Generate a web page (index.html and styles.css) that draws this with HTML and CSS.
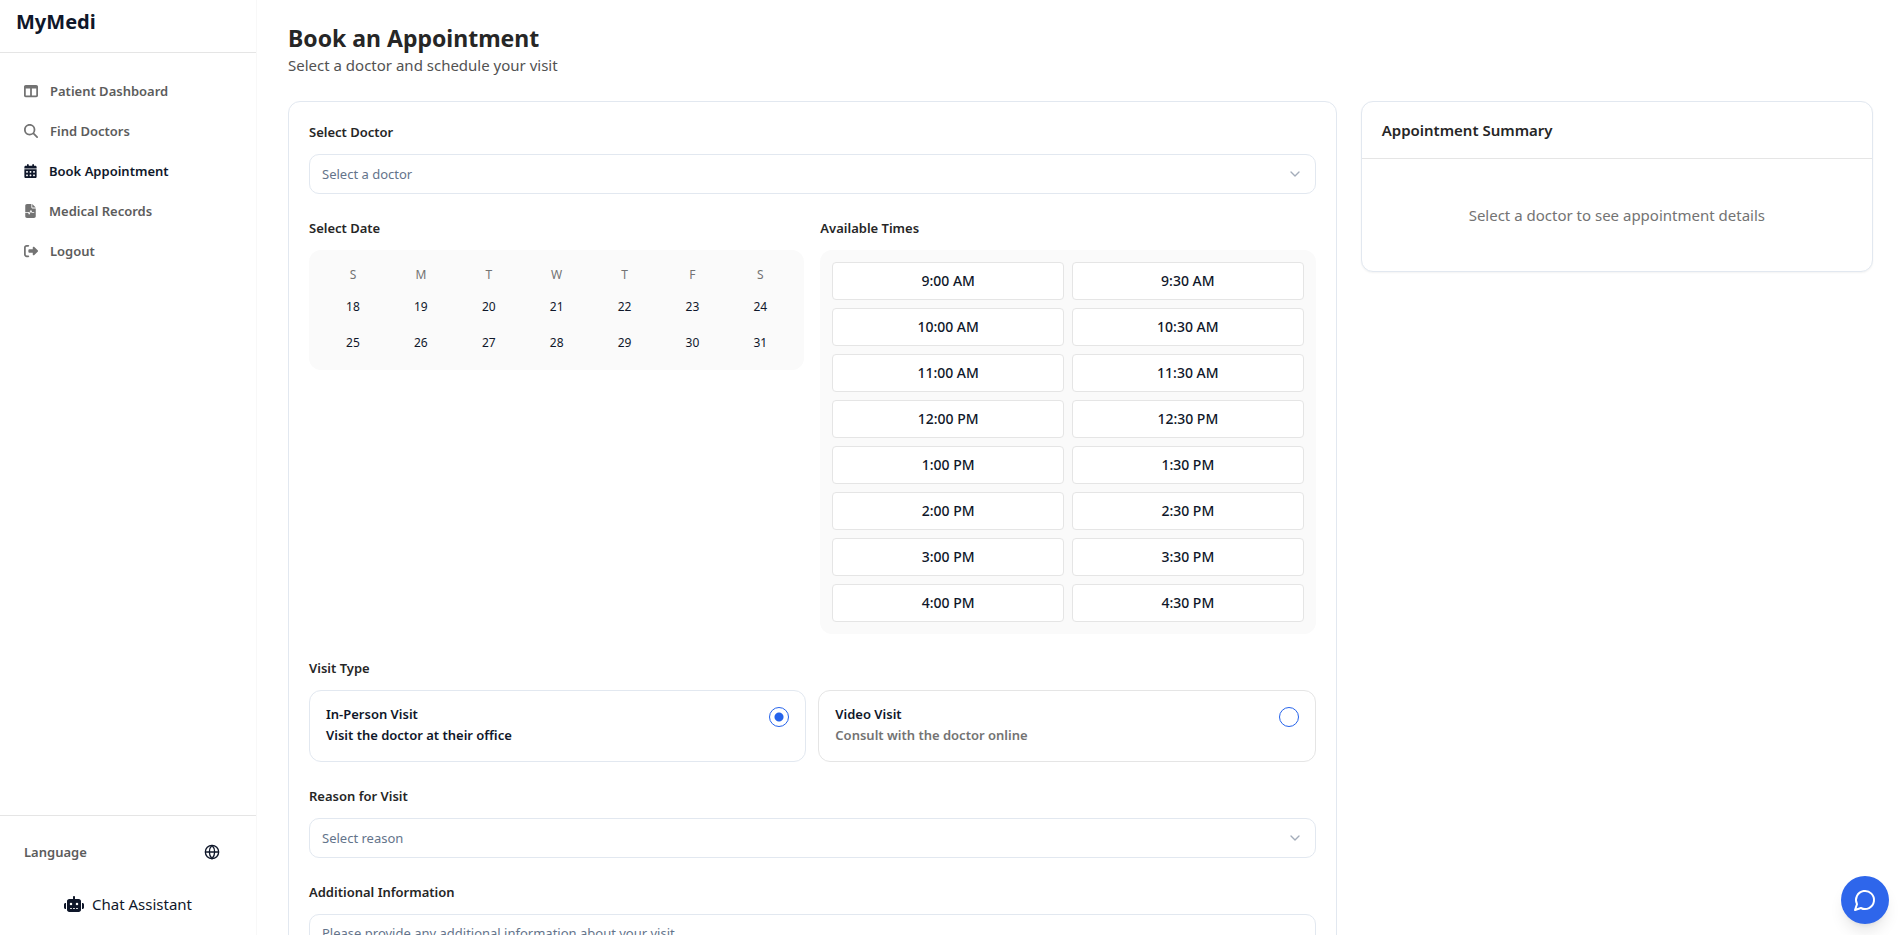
FILE: index.html
```html
<!DOCTYPE html>
<html lang="en">
<head>
<meta charset="utf-8">
<meta name="viewport" content="width=device-width, initial-scale=1">
<title>MyMedi - Book an Appointment</title>
<link rel="stylesheet" href="styles.css">
</head>
<body>
<div class="app">
  <aside class="sidebar">
    <div class="brand">MyMedi</div>
    <nav class="nav">
      <a class="nav-link" href="#"><svg class="fa" viewBox="0 0 512 512"><path d="M0 96C0 60.7 28.7 32 64 32H448c35.3 0 64 28.7 64 64V416c0 35.3-28.7 64-64 64H64c-35.3 0-64-28.7-64-64V96zm64 64V416H224V160H64zm384 0H288V416H448V160z"/></svg>Patient Dashboard</a>
      <a class="nav-link" href="#"><svg class="fa" viewBox="0 0 512 512"><path d="M416 208c0 45.900-14.900 88.300-40 122.700L502.600 457.400c12.500 12.500 12.500 32.800 0 45.300s-32.800 12.500-45.300 0L330.700 376c-34.400 25.200-76.800 40-122.700 40C93.100 416 0 322.900 0 208S93.100 0 208 0S416 93.100 416 208zM208 352a144 144 0 1 0 0-288 144 144 0 1 0 0 288z"/></svg>Find Doctors</a>
      <a class="nav-link active" href="#" aria-current="page"><svg class="fa narrow" viewBox="0 0 448 512"><path d="M128 0c17.700 0 32 14.300 32 32V64H288V32c0-17.700 14.300-32 32-32s32 14.300 32 32V64h48c26.500 0 48 21.500 48 48v48H0V112C0 85.500 21.500 64 48 64H96V32c0-17.700 14.300-32 32-32zM0 192H448V464c0 26.500-21.500 48-48 48H48c-26.500 0-48-21.500-48-48V192zm64 80v32c0 8.800 7.200 16 16 16h32c8.800 0 16-7.200 16-16V272c0-8.800-7.200-16-16-16H80c-8.800 0-16 7.200-16 16zm128 0v32c0 8.800 7.200 16 16 16h32c8.800 0 16-7.200 16-16V272c0-8.800-7.200-16-16-16H208c-8.800 0-16 7.200-16 16zm144-16c-8.800 0-16 7.200-16 16v32c0 8.800 7.200 16 16 16h32c8.800 0 16-7.200 16-16V272c0-8.800-7.200-16-16-16H336zM64 400v32c0 8.800 7.200 16 16 16h32c8.800 0 16-7.200 16-16V400c0-8.800-7.200-16-16-16H80c-8.800 0-16 7.200-16 16zm144-16c-8.800 0-16 7.200-16 16v32c0 8.800 7.200 16 16 16h32c8.800 0 16-7.200 16-16V400c0-8.800-7.200-16-16-16H208zm112 16v32c0 8.800 7.200 16 16 16h32c8.800 0 16-7.200 16-16V400c0-8.800-7.200-16-16-16H336c-8.800 0-16 7.200-16 16z"/></svg>Book Appointment</a>
      <a class="nav-link" href="#"><svg class="fa narrow" viewBox="0 0 448 512"><path d="M96 0C60.700 0 32 28.700 32 64V288H144c6.100 0 11.600 3.400 14.300 8.800L176 332.200l49.700-99.400c2.700-5.400 8.300-8.800 14.300-8.800s11.600 3.400 14.300 8.800L281.900 288H352c8.800 0 16 7.200 16 16s-7.200 16-16 16H272c-6.100 0-11.600-3.400-14.300-8.800L240 275.800l-49.700 99.400c-2.700 5.400-8.300 8.800-14.300 8.800s-11.600-3.400-14.300-8.800L134.100 320H32V448c0 35.300 28.700 64 64 64H352c35.300 0 64-28.700 64-64V160H288c-17.700 0-32-14.300-32-32V0H96zM288 0V128H416L288 0z"/></svg>Medical Records</a>
      <a class="nav-link" href="#"><svg class="fa" viewBox="0 0 512 512"><path d="M377.900 105.900L500.700 228.700c7.200 7.200 11.300 17.100 11.300 27.300s-4.100 20.100-11.300 27.300L377.900 406.100c-6.400 6.400-15 9.900-24 9.900c-18.700 0-33.900-15.200-33.900-33.900l0-62.100-128 0c-17.700 0-32-14.300-32-32l0-64c0-17.700 14.300-32 32-32l128 0 0-62.100c0-18.700 15.200-33.900 33.900-33.900c9 0 17.600 3.600 24 9.900zM160 96L96 96c-17.700 0-32 14.300-32 32l0 256c0 17.700 14.300 32 32 32l64 0c17.700 0 32 14.300 32 32s-14.300 32-32 32l-64 0c-53 0-96-43-96-96L0 128C0 75 43 32 96 32l64 0c17.700 0 32 14.300 32 32s-14.300 32-32 32z"/></svg>Logout</a>
    </nav>
    <div class="side-foot">
      <div class="language">
        <span>Language</span>
        <button class="icon-btn" type="button" aria-label="Change language"><svg class="line-icon" viewBox="0 0 24 24"><circle cx="12" cy="12" r="10"/><path d="M12 2a14.500 14.500 0 0 0 0 20 14.500 14.500 0 0 0 0-20M2 12h20"/></svg></button>
      </div>
      <button class="assistant" type="button"><svg class="robot" viewBox="0 0 640 512"><path d="M320 0c17.700 0 32 14.300 32 32V96H472c39.800 0 72 32.200 72 72V440c0 39.800-32.200 72-72 72H168c-39.800 0-72-32.200-72-72V168c0-39.800 32.200-72 72-72H288V32c0-17.700 14.300-32 32-32zM208 384c-8.800 0-16 7.200-16 16s7.200 16 16 16h32c8.800 0 16-7.200 16-16s-7.200-16-16-16H208zm96 0c-8.800 0-16 7.200-16 16s7.200 16 16 16h32c8.800 0 16-7.200 16-16s-7.200-16-16-16H304zm96 0c-8.800 0-16 7.200-16 16s7.200 16 16 16h32c8.800 0 16-7.200 16-16s-7.200-16-16-16H400zM264 256a40 40 0 1 0 -80 0 40 40 0 1 0 80 0zm152 40a40 40 0 1 0 0-80 40 40 0 1 0 0 80zM48 224H64V416H48c-26.500 0-48-21.500-48-48V272c0-26.500 21.500-48 48-48zm544 0c26.500 0 48 21.500 48 48v96c0 26.500-21.500 48-48 48H576V224h16z"/></svg>Chat Assistant</button>
    </div>
  </aside>

  <main class="main">
    <header class="page-head">
      <h1 class="page-title">Book an Appointment</h1>
      <p class="page-sub">Select a doctor and schedule your visit</p>
    </header>
    <div class="columns">
      <form class="card form">
        <div class="field">
          <label class="field-label" for="doctor">Select Doctor</label>
          <div class="select-wrap">
            <select class="select" id="doctor"><option>Select a doctor</option></select>
            <svg class="chevron" viewBox="0 0 24 24"><path d="m6 9 6 6 6-6"/></svg>
          </div>
        </div>

        <div class="schedule">
          <section class="field">
            <h2 class="field-label">Select Date</h2>
            <div class="calendar">
              <span class="dow">S</span><span class="dow">M</span><span class="dow">T</span><span class="dow">W</span><span class="dow">T</span><span class="dow">F</span><span class="dow">S</span>
              <button class="day" type="button">18</button><button class="day" type="button">19</button><button class="day" type="button">20</button><button class="day" type="button">21</button><button class="day" type="button">22</button><button class="day" type="button">23</button><button class="day" type="button">24</button>
              <button class="day" type="button">25</button><button class="day" type="button">26</button><button class="day" type="button">27</button><button class="day" type="button">28</button><button class="day" type="button">29</button><button class="day" type="button">30</button><button class="day" type="button">31</button>
            </div>
          </section>
          <section class="field">
            <h2 class="field-label">Available Times</h2>
            <div class="times">
              <button class="slot" type="button">9:00 AM</button><button class="slot" type="button">9:30 AM</button>
              <button class="slot" type="button">10:00 AM</button><button class="slot" type="button">10:30 AM</button>
              <button class="slot" type="button">11:00 AM</button><button class="slot" type="button">11:30 AM</button>
              <button class="slot" type="button">12:00 PM</button><button class="slot" type="button">12:30 PM</button>
              <button class="slot" type="button">1:00 PM</button><button class="slot" type="button">1:30 PM</button>
              <button class="slot" type="button">2:00 PM</button><button class="slot" type="button">2:30 PM</button>
              <button class="slot" type="button">3:00 PM</button><button class="slot" type="button">3:30 PM</button>
              <button class="slot" type="button">4:00 PM</button><button class="slot" type="button">4:30 PM</button>
            </div>
          </section>
        </div>

        <section class="field">
          <h2 class="field-label">Visit Type</h2>
          <div class="visits">
            <label class="visit selected" for="in-person">
              <span class="visit-text"><span class="visit-name">In-Person Visit</span><span class="visit-desc">Visit the doctor at their office</span></span>
              <input class="radio" type="radio" name="visit" id="in-person" checked>
            </label>
            <label class="visit" for="video">
              <span class="visit-text"><span class="visit-name">Video Visit</span><span class="visit-desc">Consult with the doctor online</span></span>
              <input class="radio" type="radio" name="visit" id="video">
            </label>
          </div>
        </section>

        <div class="field">
          <label class="field-label" for="reason">Reason for Visit</label>
          <div class="select-wrap">
            <select class="select" id="reason"><option>Select reason</option></select>
            <svg class="chevron" viewBox="0 0 24 24"><path d="m6 9 6 6 6-6"/></svg>
          </div>
        </div>

        <div class="field">
          <label class="field-label" for="info">Additional Information</label>
          <textarea class="textarea" id="info" placeholder="Please provide any additional information about your visit"></textarea>
        </div>
      </form>

      <aside class="card summary">
        <h2 class="summary-title">Appointment Summary</h2>
        <p class="summary-empty">Select a doctor to see appointment details</p>
      </aside>
    </div>
  </main>
</div>
<button class="chat-fab" type="button" aria-label="Open chat"><svg viewBox="0 0 24 24"><path d="M7.900 20A9 9 0 1 0 4 16.100L2 22Z"/></svg></button>
</body>
</html>
```
FILE: styles.css
```css
* { box-sizing: border-box; }

body {
  margin: 0;
  font-family: "Segoe UI", "Noto Sans", sans-serif;
  font-size: 15px;
  line-height: 24px;
  color: #0f172a;
  background: #fff;
}

h1, h2, p { margin: 0; }

button, select, textarea, input { font: inherit; color: inherit; }

button {
  padding: 0;
  border: 0;
  background: none;
  cursor: pointer;
}

.app {
  display: flex;
  height: 100vh;
}

/* Sidebar */
.sidebar {
  display: flex;
  flex-direction: column;
  flex: none;
  width: 257px;
  border-right: 1px solid #f8f8f8;
}

.brand {
  padding: 8px 16px 16px;
  border-bottom: 1px solid #e5e5e5;
  font-size: 20px;
  font-weight: 700;
  line-height: 28px;
}

.nav {
  display: flex;
  flex-direction: column;
  gap: 4px;
  padding: 20px 12px;
}

.nav-link {
  display: flex;
  align-items: center;
  gap: 12px;
  height: 36px;
  padding: 0 12px;
  font-size: 13px;
  font-weight: 600;
  color: #5c5c5c;
  text-decoration: none;
}

.nav-link.active { color: #0f172a; }

.fa {
  width: 14px;
  height: 14px;
  fill: #737373;
}

.fa.narrow { width: 13px; }

.active .fa { fill: #0f172a; }

.side-foot {
  margin-top: auto;
  padding: 16px 16px 13px;
  border-top: 1px solid #e5e5e5;
}

.language {
  display: flex;
  align-items: center;
  justify-content: space-between;
  height: 40px;
  padding: 0 8px;
  font-size: 13px;
  font-weight: 600;
  color: #5c5c5c;
}

.icon-btn {
  display: grid;
  place-items: center;
  width: 40px;
  height: 40px;
  color: #0f172a;
}

.line-icon {
  width: 16px;
  height: 16px;
  fill: none;
  stroke: currentColor;
  stroke-width: 2;
}

.assistant {
  display: flex;
  align-items: center;
  justify-content: center;
  gap: 8px;
  width: 100%;
  margin-top: 14px;
  height: 36px;
}

.robot {
  width: 20px;
  height: 16px;
  fill: currentColor;
}

/* Main area */
.main {
  flex: 1;
  min-width: 0;
  padding: 23px 29px 24px 31px;
  overflow-y: auto;
  scrollbar-width: none;
}

.page-head { margin-bottom: 24px; }

.page-title {
  font-size: 23px;
  font-weight: 700;
  line-height: 30px;
  color: #262626;
}

.page-sub { color: #525252; }

.columns {
  display: grid;
  grid-template-columns: repeat(3, minmax(0, 1fr));
  gap: 24px;
  align-items: start;
}

.card {
  border: 1px solid #e2e8f0;
  border-radius: 12px;
  background: #fff;
}

.form {
  display: flex;
  flex-direction: column;
  grid-column: span 2;
  gap: 24px;
  padding: 20px;
}

.field {
  display: flex;
  flex-direction: column;
  gap: 12px;
}

.field-label {
  font-size: 13px;
  font-weight: 600;
  line-height: 20px;
  color: #262626;
}

.select-wrap { position: relative; }

.select {
  display: block;
  width: 100%;
  height: 40px;
  padding: 0 12px;
  border: 1px solid #e2e8f0;
  border-radius: 10px;
  background: #fff;
  font-size: 13px;
  color: #64748b;
  appearance: none;
}

.chevron {
  position: absolute;
  top: 12px;
  right: 13px;
  width: 16px;
  height: 16px;
  fill: none;
  stroke: #a3acba;
  stroke-width: 2;
  stroke-linecap: round;
  stroke-linejoin: round;
  pointer-events: none;
}

.schedule {
  display: grid;
  grid-template-columns: 1fr 1fr;
  gap: 16px;
  align-items: start;
}

.calendar,
.times {
  display: grid;
  padding: 12px;
  border-radius: 12px;
  background: #fafafa;
}

.calendar {
  grid-template-columns: repeat(7, 1fr);
  gap: 4px;
  font-size: 12px;
  text-align: center;
}

.dow {
  height: 24px;
  padding-top: 1px;
  color: #737373;
}

.day {
  height: 32px;
  padding-top: 2px;
}

.times {
  grid-template-columns: 1fr 1fr;
  gap: 8px;
}

.slot {
  height: 38px;
  border: 1px solid #e5e5e5;
  border-radius: 4px;
  background: #fff;
  font-size: 14px;
  font-weight: 500;
}

.visits {
  display: grid;
  grid-template-columns: 1fr 1fr;
  gap: 12px;
}

.visit {
  display: flex;
  align-items: flex-start;
  justify-content: space-between;
  padding: 16px;
  border: 1px solid #e5e5e5;
  border-radius: 12px;
  font-size: 13px;
  font-weight: 600;
  cursor: pointer;
}

.visit.selected { border-color: #e2e8f0; }

.visit-text {
  display: flex;
  flex-direction: column;
  gap: 4px;
}

.visit-name { line-height: 14px; }

.visit-desc {
  line-height: 20px;
  color: #737373;
}

.selected .visit-desc { color: #0f172a; }

.radio {
  width: 20px;
  height: 20px;
  margin: 0;
  border: 1px solid #2563eb;
  border-radius: 50%;
  appearance: none;
}

.radio:checked { background: radial-gradient(circle, #2563eb 4px, transparent 5px); }

.textarea {
  display: block;
  width: 100%;
  height: 80px;
  padding: 8px 12px;
  border: 1px solid #e2e8f0;
  border-radius: 10px;
  font-size: 13px;
  line-height: 20px;
  resize: none;
}

.textarea::placeholder { color: #64748b; }

.summary { box-shadow: 0 1px 2px rgba(0, 0, 0, 0.05); }

.summary-title {
  padding: 16px 20px;
  border-bottom: 1px solid #e5e5e5;
  font-size: 15px;
  font-weight: 600;
  line-height: 24px;
  color: #262626;
}

.summary-empty {
  padding: 44px 20px;
  text-align: center;
  color: #737373;
}

/* Floating chat button */
.chat-fab {
  position: fixed;
  right: 13px;
  bottom: 11px;
  display: grid;
  place-items: center;
  width: 48px;
  height: 48px;
  border-radius: 50%;
  background: #2e66eb;
  box-shadow: 0 10px 15px -3px rgba(0, 0, 0, 0.1), 0 4px 6px -4px rgba(0, 0, 0, 0.1);
}

.chat-fab svg {
  width: 24px;
  height: 24px;
  fill: none;
  stroke: #fff;
  stroke-width: 2;
  stroke-linecap: round;
  stroke-linejoin: round;
}
```
